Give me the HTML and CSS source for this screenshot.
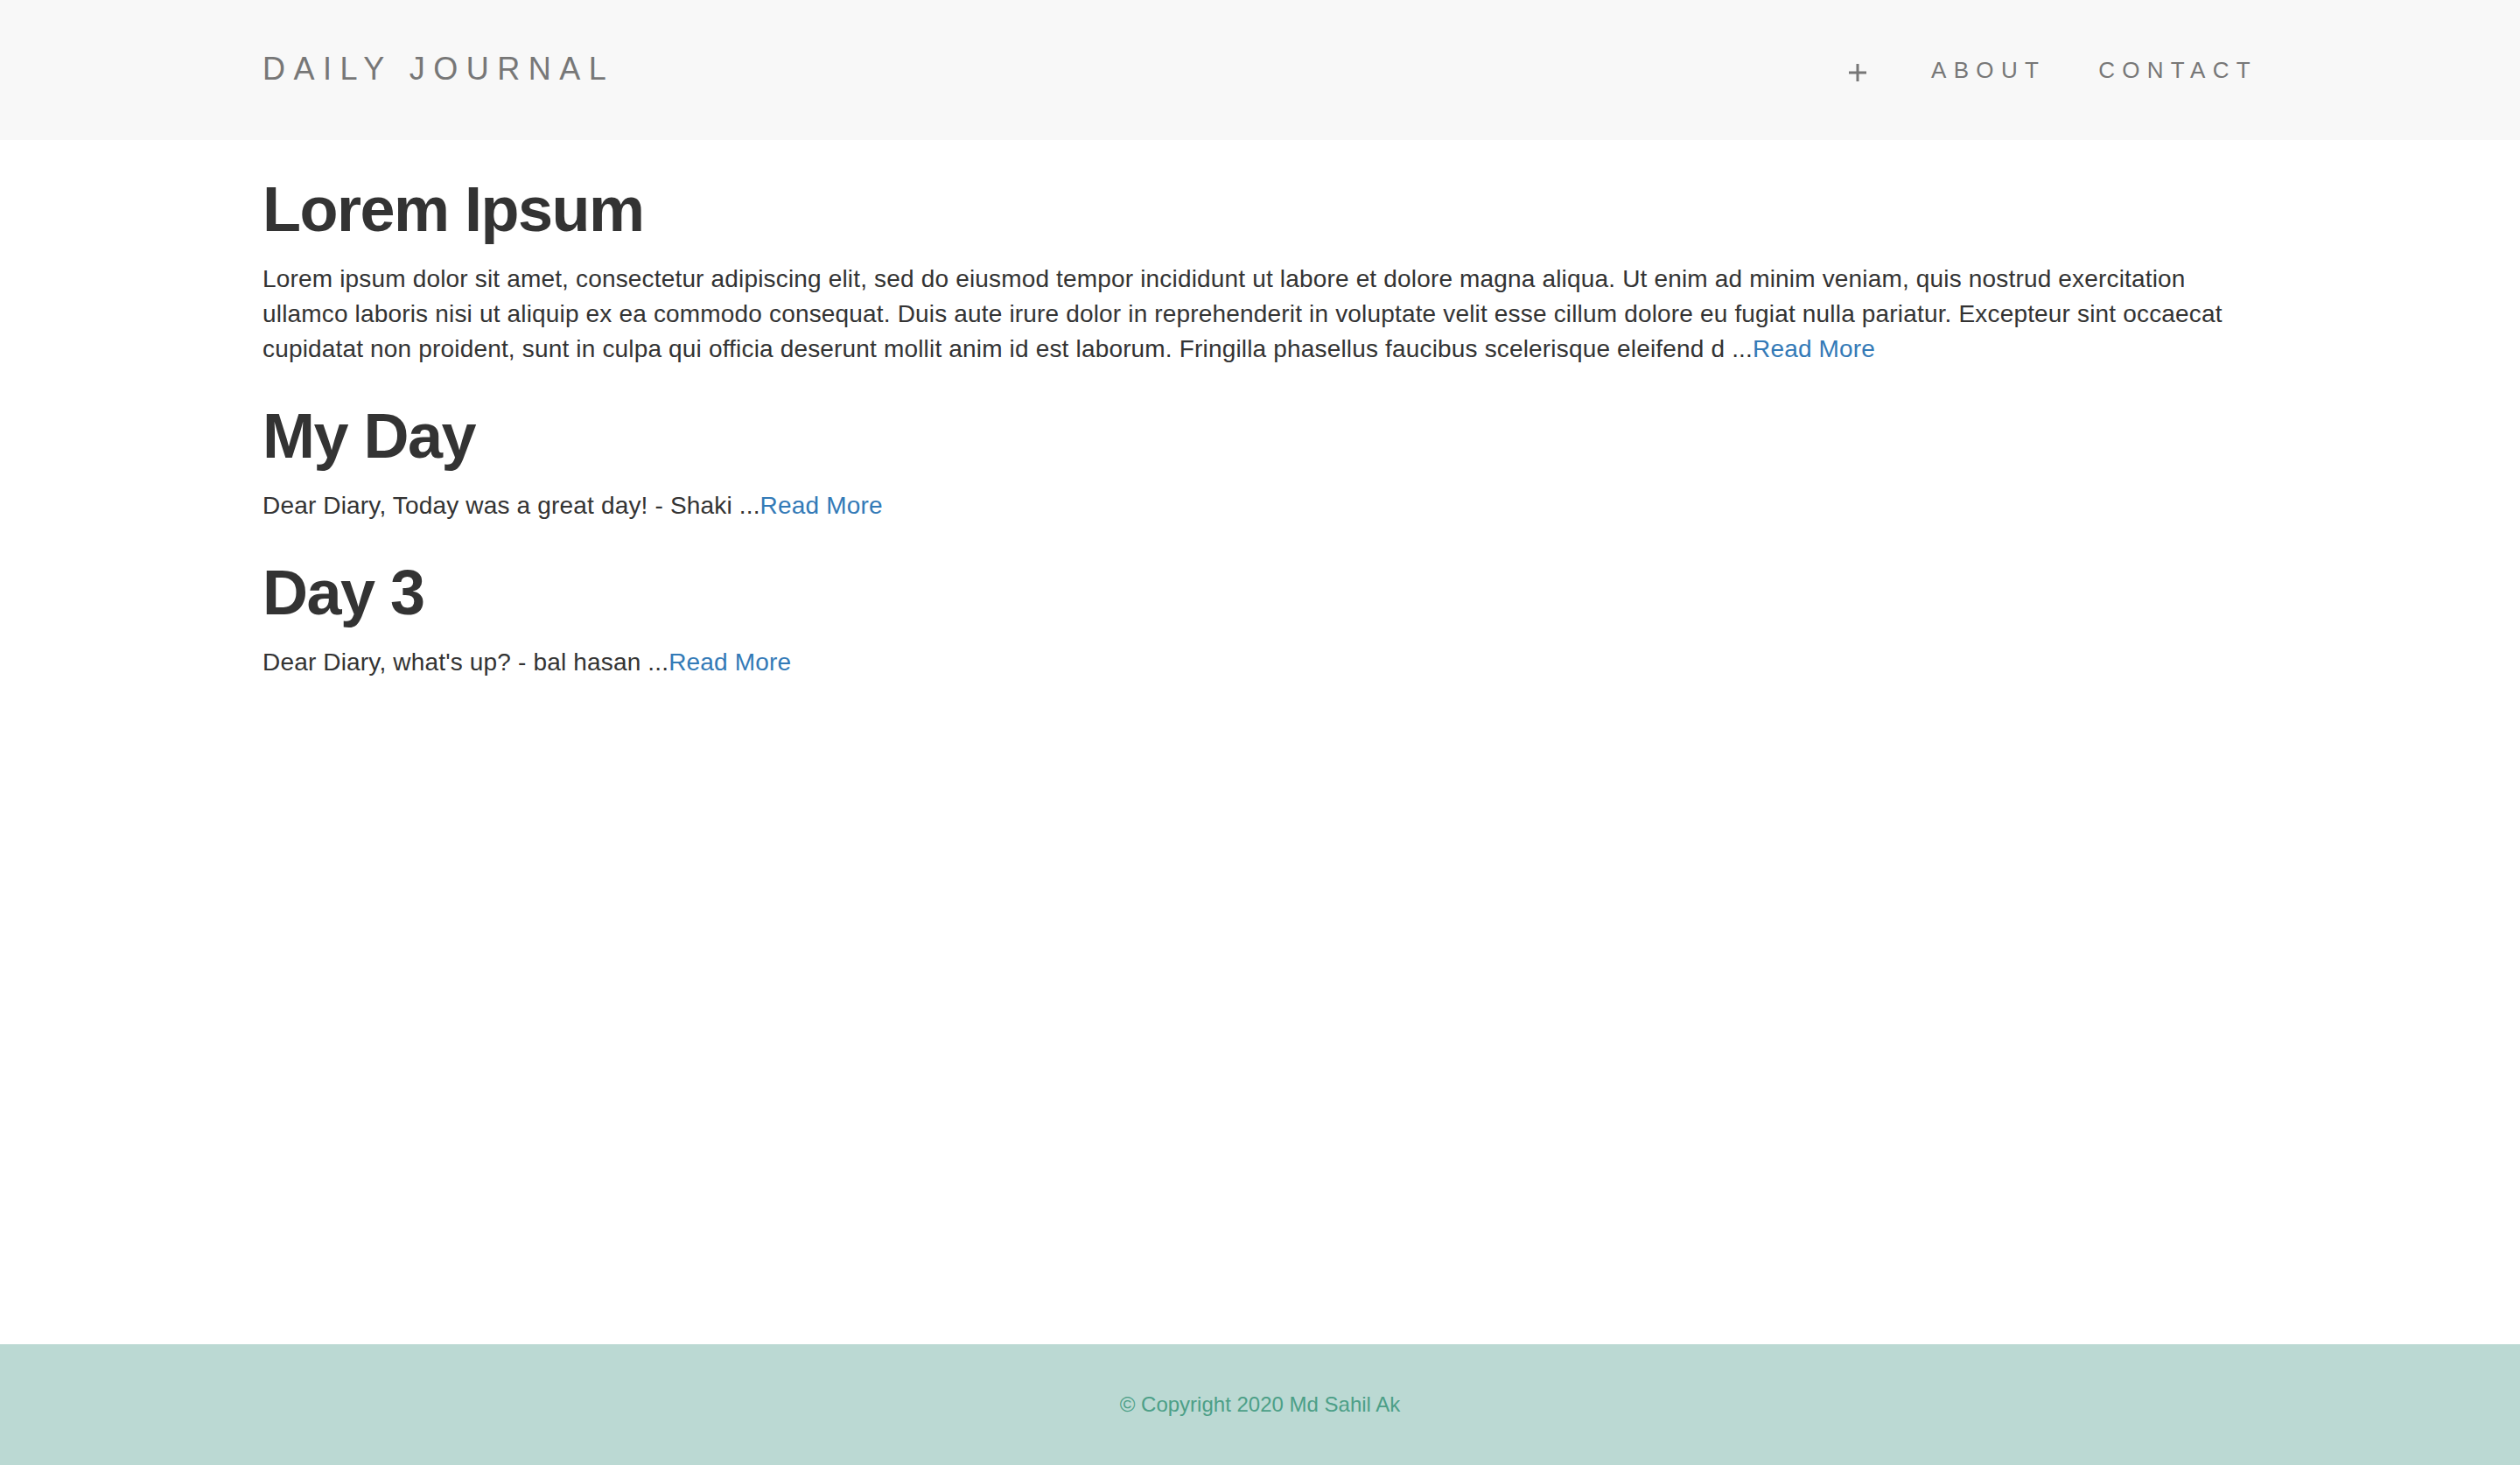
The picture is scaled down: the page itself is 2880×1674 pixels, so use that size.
FILE: index.html
```html
<!DOCTYPE html>
<html lang="en">
<head>
<meta charset="utf-8">
<title>Daily Journal</title>
<link rel="stylesheet" href="styles.css">
</head>
<body>
<header class="navbar">
  <div class="container nav-inner">
    <a class="brand" href="#">DAILY JOURNAL</a>
    <ul class="nav-links">
      <li><a class="nav-link plus-link" href="#"><svg class="plus" width="20" height="20" viewBox="0 0 20 20"><rect x="8.5" y="0" width="3" height="20" fill="#777"/><rect x="0" y="8.5" width="20" height="3" fill="#777"/></svg></a></li>
      <li><a class="nav-link" href="#">ABOUT</a></li>
      <li><a class="nav-link" href="#">CONTACT</a></li>
    </ul>
  </div>
</header>
<main class="container content">
  <article class="post">
    <h1>Lorem Ipsum</h1>
    <p>Lorem ipsum dolor sit amet, consectetur adipiscing elit, sed do eiusmod tempor incididunt ut labore et dolore magna aliqua. Ut enim ad minim veniam, quis nostrud exercitation ullamco laboris nisi ut aliquip ex ea commodo consequat. Duis aute irure dolor in reprehenderit in voluptate velit esse cillum dolore eu fugiat nulla pariatur. Excepteur sint occaecat cupidatat non proident, sunt in culpa qui officia deserunt mollit anim id est laborum. Fringilla phasellus faucibus scelerisque eleifend d ...<a href="#">Read More</a></p>
  </article>
  <article class="post">
    <h1>My Day</h1>
    <p>Dear Diary, Today was a great day! - Shaki ...<a href="#">Read More</a></p>
  </article>
  <article class="post">
    <h1>Day 3</h1>
    <p>Dear Diary, what's up? - bal hasan ...<a href="#">Read More</a></p>
  </article>
</main>
<footer class="footer">
  <p class="copyright">© Copyright 2020 Md Sahil Ak</p>
</footer>
</body>
</html>
```

FILE: styles.css
```css
* { box-sizing: border-box; }
html, body { margin: 0; padding: 0; }
body {
  font-family: "Liberation Sans", Arial, Helvetica, sans-serif;
  font-size: 28px;
  line-height: 40px;
  color: #333;
  background: #fff;
  min-height: 100vh;
  display: flex;
  flex-direction: column;
}
a { color: #337ab7; text-decoration: none; }
.container {
  width: 2340px;
  margin: 0 auto;
  padding: 0 30px;
}
.navbar {
  background: #f8f8f8;
  height: 160px;
}
.nav-inner {
  height: 160px;
  display: flex;
  align-items: center;
  justify-content: space-between;
}
.brand {
  font-size: 36px;
  letter-spacing: 9.5px;
  color: #777;
  line-height: 40px;
  margin-top: -2px;
}
.nav-links {
  list-style: none;
  margin: 0 -30px 0 0;
  padding: 0;
  display: flex;
  align-items: center;
}
.nav-link {
  display: block;
  padding: 0 30px;
  font-size: 26px;
  letter-spacing: 8.3px;
  color: #777;
  line-height: 40px;
}
.plus-link {
  padding: 0 44px 0 30px;
  display: flex;
  align-items: center;
  height: 40px;
  margin-top: 6px;
}
.plus { display: block; }
.content {
  flex: 1;
}
.post h1 {
  font-size: 72px;
  font-weight: 700;
  letter-spacing: -1.5px;
  line-height: 79px;
  margin: 40px 0 20px;
  color: #333;
}
.post p {
  margin: 0 0 20px;
  letter-spacing: 0.17px;
}
.footer {
  background: #bbd9d3;
  height: 138px;
  display: flex;
  align-items: center;
  justify-content: center;
}
.copyright {
  margin: 0;
  font-size: 24px;
  line-height: 34px;
  color: #4c9f87;
}
```
